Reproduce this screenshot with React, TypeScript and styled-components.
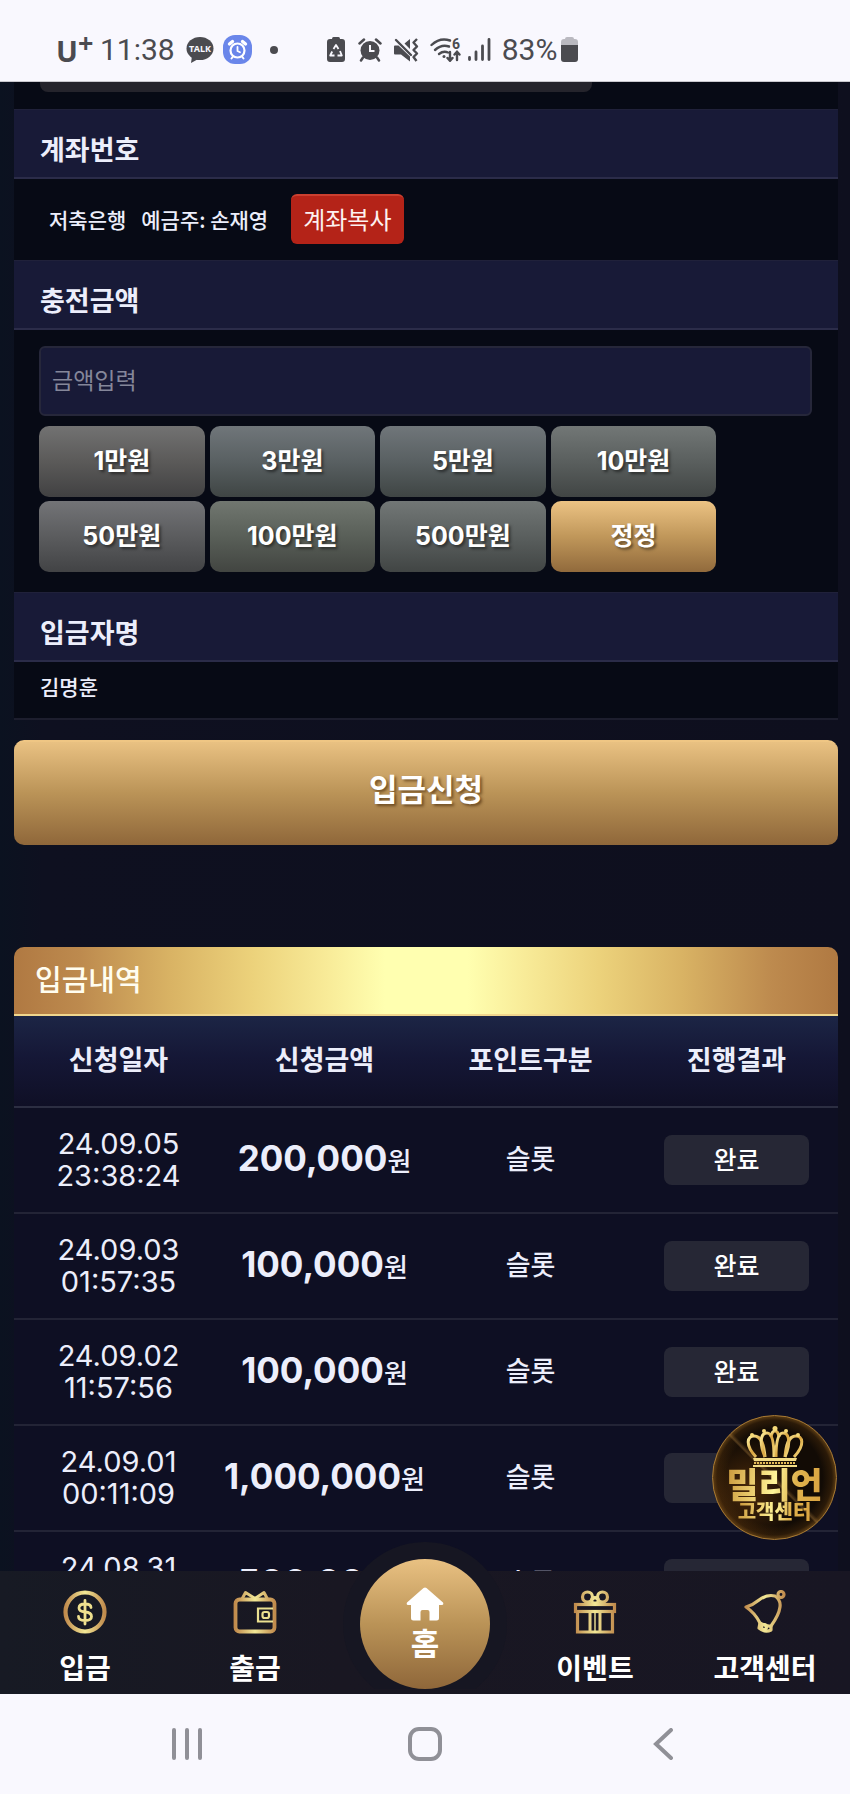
import React from "react";
import styled, { createGlobalStyle } from "styled-components";

const GlobalStyle = createGlobalStyle`
  *, *::before, *::after { box-sizing: border-box; }
  html, body { margin: 0; padding: 0; background: #0e111f; }
  body {
    font-family: Inter, "Noto Sans CJK KR", sans-serif;
    color: #eceefb;
  }
  button, input { font-family: inherit; margin: 0; }
  a { color: inherit; text-decoration: none; }
`;

const Shell = styled.div`
  display: flex;
  flex-direction: column;
  height: 100vh;
  overflow: hidden;
`;

/* ---------- status bar ---------- */

const StatusBar = styled.header`
  flex: none;
  display: flex;
  align-items: center;
  height: 82px;
  padding: 18px 0 0 56px;
  background: #f9f8fe;
  border-bottom: 1px solid #c9c8ce;
  color: #4b4b50;
  font-family: Roboto, sans-serif;
`;

const Carrier = styled.span`
  display: flex;
  align-items: center;
  width: 44px;
  padding-top: 2px;
  font: 700 29px/30px "Noto Sans", sans-serif;

  sup {
    font-size: 27px;
    line-height: 24px;
    margin-bottom: 16px;
  }
`;

const StatusText = styled.span<{ $gap: number }>`
  font-size: 30px;
  line-height: 32px;
  margin-right: ${(p) => p.$gap}px;
`;

const StatusIcon = styled.svg<{ $gap: number }>`
  flex: none;
  display: block;
  margin-right: ${(p) => p.$gap}px;
`;

/* ---------- deposit form ---------- */

const Stage = styled.div`
  position: relative;
  flex: 1;
  min-height: 0;
`;

const Scroller = styled.main`
  height: 100%;
  overflow-y: auto;
  scrollbar-width: none;
  padding: 0 12px 0 14px;
  background: linear-gradient(90deg, #0b1220 0, #0e1020 5%, #0e0f1e 100%);
`;

const Panel = styled.section`
  background: #070a15;
  border-bottom: 2px solid #1d1e2e;
`;

const FieldEdge = styled.div`
  width: 67%;
  height: 10px;
  margin: 0 0 17px 26px;
  border-radius: 0 0 8px 8px;
  background: #25242c;
`;

const PanelTop = styled.div`
  display: flex;
`;

const SectionTitle = styled.h2`
  display: flex;
  align-items: center;
  height: 70px;
  margin: 0;
  padding: 14px 26px 0;
  background: #181a37;
  border-top: 1px solid #20213a;
  border-bottom: 2px solid #2b2c49;
  font-size: 27px;
  line-height: 32px;
  font-weight: 700;
`;

const AccountRow = styled.div`
  display: flex;
  align-items: center;
  gap: 15px;
  height: 81px;
  padding: 0 35px 2px;
  font-family: "Noto Sans CJK KR", sans-serif;
  font-size: 21px;
  line-height: 32px;
  font-weight: 500;
`;

const CopyButton = styled.button`
  height: 50px;
  margin-left: 8px;
  padding: 0 12px 2px;
  border: 0;
  border-top: 2px solid #cb4030;
  border-radius: 6px;
  background: #b42318;
  color: #fdf1f0;
  font-size: 24px;
  line-height: 32px;
`;

const AmountBody = styled.div`
  display: flex;
  flex-direction: column;
  gap: 10px;
  padding: 16px 26px 20px 25px;
`;

const AmountInput = styled.input`
  width: 100%;
  height: 70px;
  padding: 0 11px;
  border: 2px solid #26273a;
  border-radius: 6px;
  outline: 0;
  background: #181a37;
  color: #eceefb;
  font-size: 23px;

  &::placeholder {
    color: #85879a;
    opacity: 1;
  }
`;

const AmountGrid = styled.div`
  display: grid;
  grid-template-columns: repeat(4, minmax(0, 1fr));
  gap: 4px 5px;
  width: 88%;
  padding-right: 3px;
`;

const AmountButton = styled.button<{ $tone: string }>`
  height: 71px;
  padding: 0 0 2px;
  border: 0;
  border-radius: 10px;
  background: ${(p) => p.$tone};
  color: #fff;
  font-size: 25px;
  line-height: 32px;
  font-weight: 700;
  text-shadow: 2px 2px 3px rgba(0, 0, 0, 0.5);
`;

const Depositor = styled.p`
  height: 56px;
  margin: 0;
  padding: 10px 26px;
  font-size: 21px;
  line-height: 32px;
  font-weight: 500;
`;

const SubmitButton = styled.button`
  display: block;
  width: 100%;
  height: 105px;
  margin: 20px 0 102px;
  padding: 0 0 8px;
  border: 0;
  border-top: 2px solid #efc684;
  border-radius: 10px;
  background: linear-gradient(180deg, #e9c182 0%, #ba9357 50%, #8f673a 100%);
  color: #fff;
  font-size: 31px;
  line-height: 40px;
  font-weight: 700;
  text-shadow: 2px 2px 3px rgba(60, 30, 0, 0.6);
`;

/* ---------- history ---------- */

const HistoryTitle = styled.h2`
  display: flex;
  align-items: center;
  height: 69px;
  margin: 0;
  padding: 0 21px;
  border-bottom: 2px solid #f0d68d;
  border-radius: 10px 10px 0 0;
  background: linear-gradient(
    90deg,
    #b07942 0%, #bd8a4e 8%, #d9b364 19%, #ecd27b 29%, #f8eb98 38%, #ffffb0 45%,
    #ffffb0 55%, #f8eb98 62%, #ecd27b 71%, #d9b364 81%, #bd8a4e 92%, #b07942 100%
  );
  color: #fffdf0;
  font-size: 29px;
  line-height: 40px;
  font-weight: 500;
`;

const HistoryTable = styled.table`
  width: 100%;
  border-collapse: separate;
  border-spacing: 0;
  table-layout: fixed;
  background: #0e0f23;
`;

const HeadRow = styled.tr`
  background: linear-gradient(180deg, #1c2545 0%, #151736 45%, #0f0f25 100%);
`;

const HeadCell = styled.th`
  height: 92px;
  padding: 0 0 0 3px;
  border-bottom: 2px solid #2c2e42;
  font-size: 27px;
  line-height: 32px;
  font-weight: 700;
`;

const Cell = styled.td`
  height: 106px;
  padding: 0 0 0 3px;
  border-bottom: 2px solid #232436;
  text-align: center;
  font-size: 27px;
  line-height: 32px;
  font-weight: 500;
`;

const Stamp = styled.time`
  display: flex;
  flex-direction: column;
  height: 64px;
  font-size: 29px;
  line-height: 32px;
  font-weight: 400;
`;

const Amount = styled.span`
  font-size: 26px;
  white-space: nowrap;

  strong {
    font-size: 35px;
    font-weight: 700;
  }
`;

const Status = styled.span`
  display: flex;
  align-items: center;
  justify-content: center;
  width: 71%;
  height: 50px;
  margin: 0 auto;
  border-radius: 8px;
  background: #262735;
  color: #fff;
  font-size: 25px;
  line-height: 32px;
`;

/* ---------- floating support badge ---------- */

const SupportBadge = styled.a`
  position: absolute;
  right: 13px;
  bottom: 31px;
  display: flex;
  flex-direction: column;
  align-items: center;
  width: 125px;
  height: 125px;
  padding-top: 10px;
  border: 1px solid #a87a33;
  border-radius: 50%;
  background:
    linear-gradient(45deg, transparent 48%, rgba(190, 140, 70, 0.35) 49%, transparent 51%),
    radial-gradient(circle at 30% 60%, rgba(120, 66, 14, 0.55), transparent 45%),
    radial-gradient(circle, #120b05 55%, #2b1a08 66%, #5c3d14 71%);
`;

const GoldText = styled.span<{ $size: number }>`
  font-size: ${(p) => p.$size}px;
  line-height: ${(p) => (p.$size > 30 ? 34 : 20)}px;
  font-weight: 900;
  white-space: nowrap;
  color: transparent;
  background: linear-gradient(100deg, #c8963a, #f3d97a 35%, #fff59a 50%, #e0b34e 70%, #d9a23f);
  -webkit-background-clip: text;
  background-clip: text;
`;

/* ---------- tab bar ---------- */

const TabBar = styled.nav`
  position: relative;
  flex: none;
  display: grid;
  grid-template-columns: repeat(5, 1fr);
  height: 123px;
  background: linear-gradient(90deg, #171a24, #191722 40%, #181623);
`;

const Tab = styled.a`
  display: flex;
  flex-direction: column;
  align-items: center;
  gap: 15px;
  padding-top: 19px;
  color: #fff;
  font-size: 28px;
  line-height: 40px;
  font-weight: 700;
  white-space: nowrap;

  svg { display: block; }
`;

const HomeSlot = styled.div`
  display: flex;
  justify-content: center;
`;

const HomeTab = styled.a`
  position: absolute;
  bottom: 5px;
  display: flex;
  flex-direction: column;
  align-items: center;
  gap: 3px;
  width: 130px;
  height: 130px;
  padding-top: 28px;
  border-radius: 50%;
  background: linear-gradient(180deg, #e9c182 0%, #ba9357 50%, #8f673a 100%);
  box-shadow: 0 0 0 17px #161622;
  clip-path: inset(-17px -17px 0 -17px);
  color: #fff;
  font-size: 31px;
  line-height: 40px;
  font-weight: 700;
`;

/* ---------- system navigation ---------- */

const SystemNav = styled.nav`
  flex: none;
  display: grid;
  grid-template-columns: repeat(3, 1fr);
  height: 100px;
  padding: 0 8%;
  background: #f9f8fe;
  z-index: 1;
`;

const SystemButton = styled.button`
  display: flex;
  align-items: center;
  justify-content: center;
  padding: 0 0 1px;
  border: 0;
  background: transparent;
`;

/* ---------- icons ---------- */

const Ink = "#4b4b50";

const TalkIcon = () => (
  <StatusIcon $gap={9} width="28" height="28" viewBox="0 0 28 28" aria-hidden="true">
    <ellipse cx="14" cy="12.5" rx="13.5" ry="11.5" fill={Ink} />
    <path d="M6 20 L5 27 L14 22 Z" fill={Ink} />
    <text x="14" y="16" textAnchor="middle" fontFamily="Noto Sans, sans-serif" fontSize="9" fontWeight="700" fill="#f9f8fe">TALK</text>
  </StatusIcon>
);

const ClockAppIcon = () => (
  <StatusIcon $gap={18} width="29" height="29" viewBox="0 0 29 29" aria-hidden="true">
    <rect width="29" height="29" rx="12" fill="#6a86ea" />
    <g fill="none" stroke="#fff" strokeLinecap="round">
      <circle cx="14.5" cy="15.5" r="7" strokeWidth="2.2" />
      <path d="M14.5 12 V16 L17 17.2" strokeWidth="1.8" />
      <path d="M6.5 9 L9.5 6.5 M22.5 9 L19.5 6.5" strokeWidth="3.4" />
      <path d="M10 21.5 L8.5 23.5 M19 21.5 L20.5 23.5" strokeWidth="2" />
    </g>
  </StatusIcon>
);

const DotIcon = () => (
  <StatusIcon $gap={49} width="8" height="8" viewBox="0 0 8 8" aria-hidden="true">
    <circle cx="4" cy="4" r="4" fill={Ink} />
  </StatusIcon>
);

const SaverIcon = () => (
  <StatusIcon $gap={13} width="18" height="25" viewBox="0 0 18 25" aria-hidden="true">
    <path d="M5 2 Q5 0 6.500 0 H11.500 Q13 0 13 2 H15 Q18 2 18 5 V22 Q18 25 15 25 H3 Q0 25 0 22 V5 Q0 2 3 2 Z" fill={Ink} />
    <path d="M6.500 12 L9 8 L11.500 12 M13 14 L14.800 18.500 H10.500 M7.500 18.500 H3.200 L5.200 14.500" fill="none" stroke="#f9f8fe" strokeWidth="1.8" strokeLinejoin="round" />
  </StatusIcon>
);

const AlarmIcon = () => (
  <StatusIcon $gap={12} width="24" height="24" viewBox="0 0 24 24" aria-hidden="true">
    <circle cx="12" cy="12.500" r="9.500" fill={Ink} />
    <path d="M1.500 5.500 L6 1.500 M22.500 5.500 L18 1.500 M5 19.500 L3 22.500 M19 19.500 L21 22.500" stroke={Ink} strokeWidth="2.500" strokeLinecap="round" />
    <path d="M12 7 V13 H16.500" fill="none" stroke="#f9f8fe" strokeWidth="2" />
  </StatusIcon>
);

const MuteIcon = () => (
  <StatusIcon $gap={11} width="25" height="24" viewBox="0 0 25 24" aria-hidden="true">
    <path d="M0 8.500 Q0 7.500 1 7.500 H4.500 L16 18.500 V23.500 L7 16.500 H1 Q0 16.500 0 15.500 Z M10.500 5.500 L16 1 V11 Z" fill={Ink} />
    <path d="M2 2 L17 17" stroke={Ink} strokeWidth="2.400" strokeLinecap="round" />
    <path d="M23 1 L19.500 4.500 L23 8.500 L19.500 12 L23 15.500 L19.500 19 L22.500 23" fill="none" stroke={Ink} strokeWidth="2.400" strokeLinejoin="round" />
  </StatusIcon>
);

const WifiIcon = () => (
  <StatusIcon $gap={6} width="32" height="24" viewBox="0 0 32 24" aria-hidden="true">
    <g fill="none" stroke={Ink} strokeWidth="2.400" strokeLinecap="round">
      <path d="M1.500 7 Q10 -1 20 2.500" />
      <path d="M5 12 Q11.500 6 19 8.500" />
      <path d="M9 16 Q13.500 12.500 18 14.500" />
      <path d="M20 14 V22.500 M17.500 20 L20 22.800 L22.500 20 M27 22 V14 M24.500 16.500 L27 13.700 L29.500 16.500" />
    </g>
    <circle cx="14" cy="18.500" r="1.500" fill={Ink} />
    <text x="26" y="11" textAnchor="middle" fontFamily="Roboto, sans-serif" fontSize="14" fontWeight="700" fill={Ink}>6</text>
  </StatusIcon>
);

const SignalIcon = () => (
  <StatusIcon $gap={11} width="23" height="23" viewBox="0 0 23 23" aria-hidden="true">
    <path d="M1.500 19.500 V21.500 M8 14 V21.500 M14.500 8 V21.500 M21 1.500 V21.500" stroke={Ink} strokeWidth="2.800" strokeLinecap="round" />
  </StatusIcon>
);

const BatteryIcon = () => (
  <StatusIcon $gap={0} width="17" height="25" viewBox="0 0 17 25" aria-hidden="true">
    <path d="M4 2 Q4 0 6 0 H11 Q13 0 13 2 H14 Q17 2 17 5 V8 H0 V5 Q0 2 3 2 Z" fill="#bab9c0" />
    <path d="M0 8 H17 V22 Q17 25 14 25 H3 Q0 25 0 22 Z" fill={Ink} />
  </StatusIcon>
);

const Gold = ({ id }: { id: string }) => (
  <defs>
    <linearGradient id={id} gradientUnits="userSpaceOnUse" x1="2" y1="0" x2="42" y2="0">
      <stop offset="0" stopColor="#c08a4c" />
      <stop offset="0.5" stopColor="#f2e896" />
      <stop offset="1" stopColor="#c08a4c" />
    </linearGradient>
  </defs>
);

const CoinIcon = () => (
  <svg width="44" height="44" viewBox="0 0 44 44" aria-hidden="true">
    <Gold id="gold-coin" />
    <circle cx="22" cy="22" r="19.500" fill="none" stroke="url(#gold-coin)" strokeWidth="4.200" />
    <path d="M28 17.500 Q28 14 22 14 Q16 14 16 18 Q16 21.500 22 22 Q28.500 22.500 28.500 26.500 Q28.500 30.500 22 30.500 Q15.500 30.500 15.500 26.500 M22 10.500 V34" fill="none" stroke="#efe08f" strokeWidth="2.800" strokeLinecap="round" />
  </svg>
);

const WalletIcon = () => (
  <svg width="44" height="44" viewBox="0 0 44 44" aria-hidden="true">
    <Gold id="gold-wallet" />
    <g fill="none" stroke="url(#gold-wallet)" strokeWidth="3.800" strokeLinejoin="round">
      <rect x="2.500" y="9.500" width="39" height="32" rx="4" />
      <path d="M9 9 L12.500 2.500 L22 8.500 L31 2.500 L34.500 9" strokeWidth="3" />
    </g>
    <g fill="none" stroke="#eadf90" strokeWidth="2.200">
      <path d="M40 18.500 H25 V31.500 H40" />
      <rect x="29.500" y="22" width="6.500" height="6" rx="2" />
    </g>
  </svg>
);

const GiftIcon = () => (
  <svg width="44" height="44" viewBox="0 0 44 44" aria-hidden="true">
    <Gold id="gold-gift" />
    <g fill="none" stroke="url(#gold-gift)" strokeWidth="3.200">
      <rect x="2.500" y="14.500" width="39" height="7" />
      <path d="M4.500 21.500 V42 H39.500 V21.500" />
      <path d="M17 22 V42 M27 22 V42" strokeWidth="3" />
      <path d="M22 22 V42" strokeWidth="1.400" />
      <circle cx="14.500" cy="7" r="5" />
      <circle cx="29.500" cy="7" r="5" />
      <path d="M19 9 L22 7.500 L25 9 V13 H19 Z" />
    </g>
  </svg>
);

const BellIcon = () => (
  <svg width="44" height="44" viewBox="0 0 44 44" aria-hidden="true">
    <Gold id="gold-bell" />
    <g fill="none" stroke="url(#gold-bell)" strokeWidth="3.200" strokeLinejoin="round">
      <path d="M3 17 Q10 15 16 10 Q24 4 32 6 Q38 10 37 17 Q36 25 28 36 Q24 37 17 33 Q12 23 3 17 Z" />
      <circle cx="38" cy="4.500" r="3" />
      <path d="M17 33 L16 38 Q22 43 28 40 L28 36" />
      <circle cx="21" cy="37" r="2.500" />
    </g>
  </svg>
);

const HouseIcon = () => (
  <svg width="38" height="34" viewBox="0 0 38 34" aria-hidden="true">
    <path d="M17.500 1 Q19 0 20.500 1 L37 15.500 Q38 17.500 36 18 H33 V31 Q33 33.500 30.500 33.500 H23.500 V25 Q23.500 23 21.500 23 H16.500 Q14.500 23 14.500 25 V33.500 H7.500 Q5 33.500 5 31 V18 H2 Q0 17.500 1 15.500 Z" fill="#fff" />
  </svg>
);

const CrownIcon = () => (
  <svg width="58" height="42" viewBox="0 0 58 42" aria-hidden="true">
    <defs>
      <linearGradient id="gold-crown" x1="0" y1="0" x2="1" y2="1">
        <stop offset="0" stopColor="#fff1a0" />
        <stop offset="0.500" stopColor="#d9a541" />
        <stop offset="1" stopColor="#f7df85" />
      </linearGradient>
    </defs>
    <g fill="none" stroke="url(#gold-crown)" strokeWidth="3">
      <path d="M10 31 C-2 18 2 10 8 10 C16 10 18 20 19 31" />
      <path d="M48 31 C60 18 56 10 50 10 C42 10 40 20 39 31" />
      <path d="M19 31 C12 14 16 7 21 7 C26 7 28 16 28 31" />
      <path d="M39 31 C46 14 42 7 37 7 C32 7 30 16 30 31" />
      <path d="M25 11 Q26 5 29 5 Q32 5 33 11" />
    </g>
    <path d="M7 32 H51 L50 35 H8 Z M7 39 H51 V41 H7 Z" fill="#f3dc85" />
    <path d="M8 37 H50" stroke="#e4bb58" strokeWidth="2" strokeDasharray="2 1" />
    <g fill="#f6da79">
      <circle cx="29" cy="2.500" r="2.500" />
      <circle cx="18" cy="5" r="2" />
      <circle cx="40" cy="5" r="2" />
      <circle cx="6" cy="9" r="2" />
      <circle cx="52" cy="9" r="2" />
    </g>
  </svg>
);

/* ---------- data ---------- */

const tones = {
  warm: "linear-gradient(180deg, #727272 0%, #5b5a59 50%, #414142 100%)",
  cool: "linear-gradient(180deg, #70767a 0%, #596062 50%, #3f4544 100%)",
  steel: "linear-gradient(180deg, #737477 0%, #5b5c5e 50%, #424345 100%)",
  moss: "linear-gradient(180deg, #717770 0%, #595f58 50%, #424541 100%)",
  slate: "linear-gradient(180deg, #727776 0%, #5a5f5e 50%, #414544 100%)",
  gold: "linear-gradient(180deg, #ecc384 0%, #c0975a 50%, #916a3c 100%)",
};

const amounts = [
  { label: "1만원", tone: tones.warm },
  { label: "3만원", tone: tones.cool },
  { label: "5만원", tone: tones.cool },
  { label: "10만원", tone: tones.slate },
  { label: "50만원", tone: tones.steel },
  { label: "100만원", tone: tones.moss },
  { label: "500만원", tone: tones.slate },
  { label: "정정", tone: tones.gold },
];

const history = [
  { date: "24.09.05", time: "23:38:24", amount: "200,000" },
  { date: "24.09.03", time: "01:57:35", amount: "100,000" },
  { date: "24.09.02", time: "11:57:56", amount: "100,000" },
  { date: "24.09.01", time: "00:11:09", amount: "1,000,000" },
  { date: "24.08.31", time: "", amount: "500,000" },
];

export default function App() {
  return (
    <>
      <GlobalStyle />
      <Shell>
        <StatusBar>
          <Carrier>U<sup>+</sup></Carrier>
          <StatusText $gap={11}>11:38</StatusText>
          <TalkIcon />
          <ClockAppIcon />
          <DotIcon />
          <SaverIcon />
          <AlarmIcon />
          <MuteIcon />
          <WifiIcon />
          <SignalIcon />
          <StatusText $gap={4}>83%</StatusText>
          <BatteryIcon />
        </StatusBar>

        <Stage>
          <Scroller>
            <Panel>
              <PanelTop>
                <FieldEdge />
              </PanelTop>
              <SectionTitle>계좌번호</SectionTitle>
              <AccountRow>
                <span>저축은행</span>
                <span>예금주: 손재영</span>
                <CopyButton type="button">계좌복사</CopyButton>
              </AccountRow>
              <SectionTitle>충전금액</SectionTitle>
              <AmountBody>
                <AmountInput type="text" inputMode="numeric" placeholder="금액입력" aria-label="충전금액" />
                <AmountGrid>
                  {amounts.map((a) => (
                    <AmountButton key={a.label} type="button" $tone={a.tone}>
                      {a.label}
                    </AmountButton>
                  ))}
                </AmountGrid>
              </AmountBody>
              <SectionTitle>입금자명</SectionTitle>
              <Depositor>김명훈</Depositor>
            </Panel>

            <SubmitButton type="button">입금신청</SubmitButton>

            <HistoryTitle>입금내역</HistoryTitle>
            <HistoryTable>
              <thead>
                <HeadRow>
                  <HeadCell>신청일자</HeadCell>
                  <HeadCell>신청금액</HeadCell>
                  <HeadCell>포인트구분</HeadCell>
                  <HeadCell>진행결과</HeadCell>
                </HeadRow>
              </thead>
              <tbody>
                {history.map((h) => (
                  <tr key={h.date}>
                    <Cell>
                      <Stamp>
                        <span>{h.date}</span>
                        <span>{h.time}</span>
                      </Stamp>
                    </Cell>
                    <Cell>
                      <Amount>
                        <strong>{h.amount}</strong>원
                      </Amount>
                    </Cell>
                    <Cell>슬롯</Cell>
                    <Cell>
                      <Status>완료</Status>
                    </Cell>
                  </tr>
                ))}
              </tbody>
            </HistoryTable>
          </Scroller>

          <SupportBadge href="#support">
            <CrownIcon />
            <GoldText $size={35}>밀리언</GoldText>
            <GoldText $size={20}>고객센터</GoldText>
          </SupportBadge>
        </Stage>

        <TabBar>
          <Tab href="#deposit"><CoinIcon />입금</Tab>
          <Tab href="#withdraw"><WalletIcon />출금</Tab>
          <HomeSlot>
            <HomeTab href="#home"><HouseIcon />홈</HomeTab>
          </HomeSlot>
          <Tab href="#event"><GiftIcon />이벤트</Tab>
          <Tab href="#help"><BellIcon />고객센터</Tab>
        </TabBar>

        <SystemNav>
          <SystemButton type="button" aria-label="최근 앱">
            <svg width="32" height="32" viewBox="0 0 32 32">
              <path d="M3 2 V30 M16 2 V30 M29 2 V30" stroke="#909097" strokeWidth="4" strokeLinecap="round" />
            </svg>
          </SystemButton>
          <SystemButton type="button" aria-label="홈 화면">
            <svg width="34" height="34" viewBox="0 0 34 34">
              <rect x="2" y="2" width="30" height="30" rx="9" fill="none" stroke="#909097" strokeWidth="4" />
            </svg>
          </SystemButton>
          <SystemButton type="button" aria-label="뒤로">
            <svg width="20" height="32" viewBox="0 0 20 32">
              <path d="M18 2 L3 16 L18 30" fill="none" stroke="#909097" strokeWidth="4" strokeLinecap="round" />
            </svg>
          </SystemButton>
        </SystemNav>
      </Shell>
    </>
  );
}
